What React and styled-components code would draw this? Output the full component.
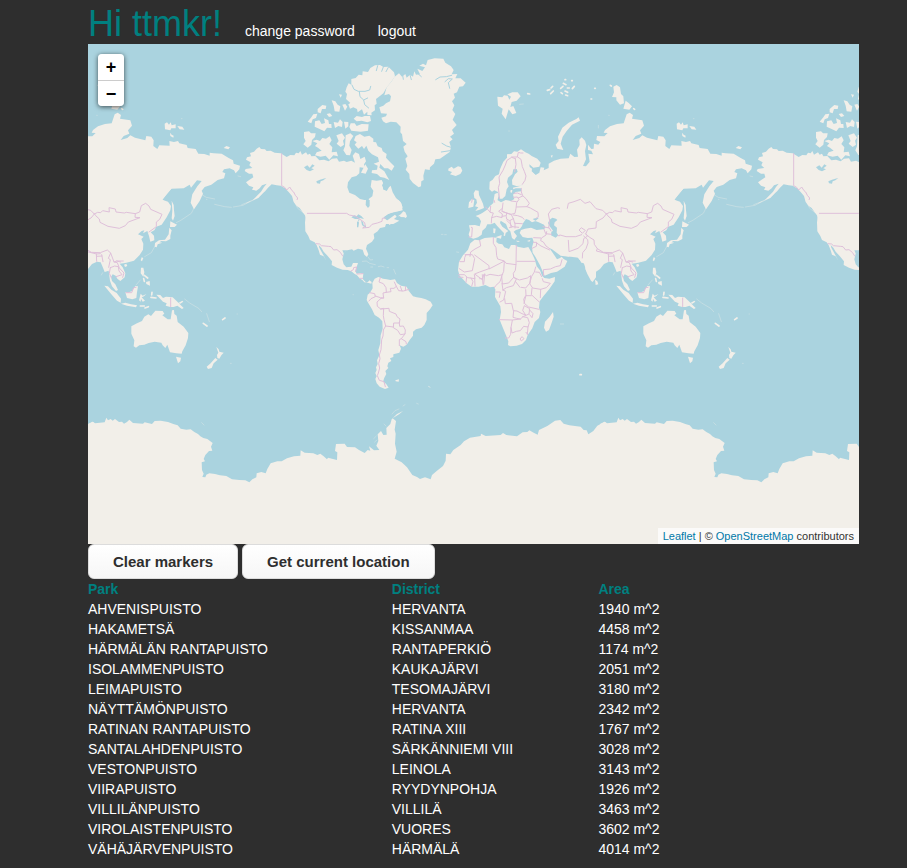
import React from "react";
import styled, { createGlobalStyle } from "styled-components";

const GlobalStyle = createGlobalStyle`
  body {
    margin: 0;
    background: #2e2e2e;
    color: #ffffff;
    font-family: "Liberation Sans", Arial, Helvetica, sans-serif;
    font-size: 14px;
    line-height: 20px;
  }
`;

const Page = styled.div`
  padding: 0 48px 9px 88px;
`;

const Header = styled.header`
  display: flex;
  align-items: baseline;
  gap: 23px;
  height: 44px;
`;

const Greeting = styled.h1`
  margin: 0;
  color: #008080;
  font-size: 36px;
  font-weight: 400;
  line-height: 48px;
`;

const HeaderLink = styled.a`
  color: #ffffff;
  text-decoration: none;
`;

const MapPane = styled.section`
  position: relative;
  height: 500px;
  overflow: hidden;
  background: #aad3df;
`;

const MapDrawing = styled.svg`
  display: block;
  width: 100%;
  height: 100%;

  .land {
    fill: #f2efe9;
  }
  .water {
    fill: #aad3df;
  }
  .isles,
  .channels,
  .borders {
    fill: none;
    stroke-linecap: round;
    stroke-linejoin: round;
  }
  .isles {
    stroke: #f2efe9;
    stroke-width: 5;
  }
  .faint {
    stroke-width: 2;
    opacity: 0.5;
  }
  .channels {
    stroke: #aad3df;
    stroke-width: 3;
  }
  .borders {
    stroke: #dfc0da;
    stroke-width: 3;
  }
`;

const ZoomControl = styled.div`
  position: absolute;
  top: 10px;
  left: 10px;
  display: flex;
  flex-direction: column;
  border-radius: 4px;
  overflow: hidden;
  box-shadow: 0 1px 5px rgba(0, 0, 0, 0.65);
`;

const ZoomButton = styled.button`
  width: 26px;
  height: 26px;
  padding: 0;
  border: 0;
  background: #ffffff;
  color: #000000;
  font: bold 18px/26px "Liberation Sans", Arial, sans-serif;

  & + & {
    border-top: 1px solid #cccccc;
  }
`;

const Attribution = styled.div`
  position: absolute;
  right: 0;
  bottom: 0;
  padding: 0 5px;
  background: rgba(255, 255, 255, 0.7);
  color: #333333;
  font-size: 11px;
  line-height: 16px;

  a {
    color: #0078a8;
    text-decoration: none;
  }
`;

const Actions = styled.div`
  display: flex;
  gap: 4px;
`;

const ActionButton = styled.button`
  height: 35px;
  padding: 0 24px;
  border: 1px solid #dcdcdc;
  border-radius: 6px;
  background: linear-gradient(#ffffff, #f6f6f6);
  color: #2e2e2e;
  font: bold 15px/20px "Liberation Sans", Arial, sans-serif;
`;

const ParkTable = styled.table`
  width: 100%;
  border-collapse: collapse;
  table-layout: fixed;
`;

const HeadCell = styled.th`
  width: ${(p) => p.$width};
  padding: 0;
  color: #008080;
  text-align: left;
`;

const Cell = styled.td`
  padding: 0;
`;

/* Each sheet of the world drawing is plotted at three units per map pixel. */
const Sheet = ({ x, y, children }) => (
  <g transform={`translate(${x} ${y}) scale(${1 / 3})`}>{children}</g>
);

const NorthAmerica = () => (
  <Sheet x={240} y={44}>
    <path className="land" d="M50,314 L58,309 63,315 75,316 80,321 92,320 104,326 122,328 140,339 151,333 163,334 168,326 176,328 181,321 186,332 198,325 203,332 210,329 214,337 226,336 238,349 252,347 266,352 276,344 291,343 297,353 312,350 320,354 334,350 345,356 338,335 346,325 357,330 361,345 374,338 378,352 372,361 375,372 359,370 358,388 349,396 335,400 324,415 322,430 328,446 345,453 360,465 373,468 376,485 385,494 390,480 386,465 397,457 400,440 392,428 395,408 410,410 425,408 431,420 429,436 440,441 447,430 452,425 458,445 468,462 481,473 488,490 480,500 462,503 445,510 430,520 440,530 465,512 470,518 462,525 478,530 460,540 197,540 196,515 188,505 179,492 170,486 161,474 156,456 146,444 135,433 122,425 110,424 95,421 84,431 76,441 67,449 55,462 38,469 51,455 63,443 72,429 80,419 66,424 59,433 49,440 36,437 40,430 27,425 18,415 31,406 40,400 37,389 27,389 14,381 17,375 37,372 28,364 32,355 18,347 21,340 33,337 30,327 42,323Z" />
    <path className="isles faint" d="M67,449 L45,466 26,474 5,482 M30,472 L20,477" />
    <path className="water" d="M192,370 L202,364 209,371 217,361 224,365 214,373 222,376 210,382 200,378Z M229,412 L240,407 250,404 259,402 250,409 242,412 240,419 231,418Z" />
    <path className="land" d="M320,130 L326,118 334,122 334,105 347,102 356,92 367,94 368,82 384,84 391,72 405,64 420,63 430,69 445,68 462,85 465,97 455,112 439,132 430,148 415,160 408,165 410,179 404,184 405,199 394,206 395,214 382,213 382,203 372,212 366,196 353,205 351,195 340,190 330,194 325,181 331,177 318,165 321,150 316,143Z" />
    <path className="channels" d="M336,123 L342,136 355,142 375,142 389,138 392,127 M358,143 L360,158 371,168 374,182 386,192 M371,168 L383,162 M413,65 L409,80 M430,69 L425,82 M445,70 L438,83" />
    <path className="land" d="M418,190 L430,185 438,178 450,172 453,157 447,150 433,154 440,130 455,112 463,99 477,88 486,98 496,90 500,101 510,92 519,98 523,82 528,92 540,91 532,74 547,81 555,70 538,65 549,59 558,64 563,48 584,43 610,44 616,56 633,67 641,78 635,91 652,90 646,103 662,103 677,116 669,127 658,128 651,145 641,149 645,161 636,172 643,184 637,198 646,210 638,227 650,243 636,258 642,269 630,278 638,286 628,294 633,310 629,324 616,333 600,344 586,346 582,359 570,370 569,378 555,376 550,395 551,408 544,412 543,427 536,430 519,417 509,404 508,390 497,377 502,366 496,344 503,337 494,323 490,308 500,300 489,291 486,271 481,265 482,248 469,235 452,233 438,238 429,232 424,221 438,217 441,209 423,208Z" />
    <path className="channels" d="M587,107 L600,99 619,98 635,94 M615,113 L625,104 637,105 625,116 629,133 M520,75 L534,89 544,98 M507,82 L514,107 M487,88 L490,106 M633,310 L620,306 606,298 M630,320 L604,324" />
    <path className="land" d="M192,264 L207,262 213,268 227,268 225,279 216,288 214,302 203,311 190,301 197,291 192,281Z M217,291 L230,287 240,291 247,282 258,284 269,277 275,289 268,300 277,310 275,325 290,323 294,337 280,334 268,347 257,335 242,338 225,334 230,325 245,320 234,311 225,306 232,298Z M289,274 L306,268 315,281 309,290 312,302 302,309 290,299 296,291Z M317,274 L331,268 340,276 330,292 328,305 335,318 330,334 319,333 310,319 315,307Z M347,276 L360,270 373,278 388,275 400,284 400,294 408,295 413,307 425,312 428,322 440,330 438,341 453,357 463,367 455,380 444,373 433,373 421,360 418,371 433,382 442,398 448,408 433,401 421,399 411,390 395,387 396,379 411,377 413,365 401,359 417,353 414,340 396,331 385,320 379,305 372,315 366,306 355,314 344,302 350,295 342,289Z M332,238 L344,238 350,246 365,240 386,241 384,260 362,263 334,260 328,249Z M350,216 L366,219 374,216 390,216 393,231 382,235 365,230 350,232 341,224Z M225,232 L238,229 245,240 255,237 252,223 265,229 267,240 274,240 275,252 261,251 253,262 239,255 224,248Z M203,233 L214,220 220,211 232,209 228,222 218,226 214,238Z M233,195 L247,183 259,185 257,195 246,195 242,208 233,205Z M275,169 L286,172 293,182 301,187 298,203 284,202 281,185Z M297,151 L306,152 302,161Z M307,182 L316,180 322,188 315,200Z M281,234 L294,236 300,226 308,234 306,249 295,246 285,252Z M312,233 L325,234 325,247 316,254Z M260,210 L270,208 277,216 267,219Z M376,361 L384,374 377,389 363,386Z M487,508 L494,505 499,520 480,519Z M625,374 L635,368 641,374 654,367 662,369 667,380 661,390 647,396 630,391 636,384 625,380Z" />
    <path className="water" d="M398,346 L405,347 400,351Z M435,408 L443,415 445,425 441,438 432,438 426,424Z" />
    <path className="borders" d="M125,329 V425 L134,430 140,438 149,429 156,440 161,444 166,454 173,462 171,468 M200,508 H320 L328,514 345,513" />
  </Sheet>
);

const CentralAndSouthAmerica = () => (
  <Sheet x={280} y={200}>
    <path className="isles faint" d="M41,0 L53,25 68,37 M50,4 L67,31" />
    <path className="land" d="M45,0 L60,22 75,42 78,53 75,67 76,94 85,108 90,120 104,127 110,136 116,151 120,164 131,169 139,182 132,169 127,160 118,143 116,135 124,143 131,155 143,168 156,184 155,195 171,203 188,209 203,210 214,214 223,221 231,226 238,234 247,240 253,247 264,246 268,241 275,246 274,251 263,248 256,245 248,237 250,221 240,219 230,221 226,213 234,189 219,189 214,200 199,202 191,193 187,178 192,157 202,151 216,148 221,152 234,146 248,149 253,164 261,171 265,163 258,146 261,135 276,125 283,115 281,102 293,94 300,84 315,81 318,72 327,64 344,61 344,67 327,75 326,65 317,58 304,57 323,41 345,36 368,31 364,10 355,0Z" />
    <path className="land" d="M370,34 L363,42 354,49 367,47 377,54 381,49 376,37Z" />
    <path className="water" d="M214,52 L223,46 230,49 235,43 244,48 252,57 239,54 234,61 237,68 235,82 231,82 231,66 240,59 249,66 251,75 258,78 257,84 246,75 243,61 235,57 225,57Z M187,151 L203,151 199,153 191,160Z M258,0 H269 L269,18 264,24 257,15Z" />
    <path className="isles faint" d="M247,184 L259,183 269,190 286,194 M295,200 L303,198 312,201 M321,203 H326 M272,201 H278 M341,208 L347,222 M265,172 L271,180 278,179" />
    <path className="land" d="M277,249 L284,236 295,231 302,233 309,236 320,238 331,240 345,238 351,249 363,257 380,260 386,272 392,280 399,289 410,292 424,294 437,298 452,305 458,316 450,328 440,339 440,360 433,375 425,383 408,388 399,395 399,407 389,420 380,434 370,440 359,436 363,446 358,458 340,463 340,471 330,475 334,483 325,488 322,499 325,504 316,513 319,522 313,533 309,545 318,551 326,563 315,567 299,560 290,550 286,537 290,529 286,519 290,510 288,502 293,492 291,481 298,466 295,450 301,430 302,406 308,386 307,364 297,353 284,345 276,328 263,306 260,300 263,284 270,278 278,265Z M346,541 L357,538 356,545 347,544Z M445,557 L453,563 446,561Z" />
    <path className="borders" d="M82,40 H200 L208,45 227,49 243,60 254,68 256,78 248,84 268,82 276,73 292,69 306,64 307,55 316,54 M108,131 L119,132 124,137 145,139 153,140 161,150 171,149 181,157 188,168 M213,213 L220,209 221,203 230,201 227,215 M231,222 L249,221 M239,235 L248,235" />
    <path className="borders" d="M301,232 L297,246 310,251 318,263 319,277 309,279 311,294 303,295 291,306 292,319 302,327 311,325 310,347 312,359 317,378 310,390 309,408 305,419 303,449 298,465 300,476 296,491 299,504 295,519 292,527 298,541 312,545 316,560 M269,278 L284,281 286,290 273,296 267,303 M286,288 L301,293 311,294 M319,277 L333,275 331,265 342,265 349,259 343,246 M349,259 L356,272 370,273 387,268 M361,259 L366,273 M377,259 L376,272 M302,327 L327,325 328,334 348,342 351,350 360,357 358,369 341,369 340,383 353,391 361,404 375,402 376,390 370,378 359,379 358,369 M317,378 L340,381 M375,402 L364,416 358,419 358,437 M364,416 L378,425 379,432" />
    <path className="isles faint" d="M219,284 H220 M484,103 H489 M494,104 H499 M530,156 L536,157" />
  </Sheet>
);

const EuropeAndAfrica = () => (
  <Sheet x={440} y={140}>
    <path className="land" d="M148,148 L149,125 158,119 166,108 177,103 180,88 190,65 201,53 201,43 214,42 222,34 232,35 243,28 256,37 266,41 275,48 292,56 302,68 298,80 280,83 268,73 269,81 276,86 275,94 287,106 450,106 450,410 439,392 432,371 417,358 408,345 386,350 362,347 350,338 336,328 328,324 340,341 351,358 360,354 365,350 371,357 382,363 374,380 351,395 333,399 314,407 307,392 300,376 286,350 278,338 276,322 281,305 277,293 263,294 248,291 239,279 243,270 255,266 273,263 290,270 311,268 317,263 312,254 296,247 286,243 297,233 285,235 278,237 287,243 276,247 267,240 258,237 249,250 246,258 240,266 228,270 221,275 231,288 223,299 216,294 211,274 204,267 198,252 182,242 180,249 187,260 205,273 197,279 195,288 191,287 192,279 183,270 171,257 164,248 153,253 142,253 137,263 127,272 125,284 114,292 100,296 89,292 86,283 90,270 87,256 105,255 119,259 123,244 117,233 107,228 120,223 128,218 141,209 150,198 160,189 162,173 164,162 173,158 176,168 172,180 183,187 197,180 213,183 223,177 219,164 227,156 243,154 243,145 227,145 220,148 219,143 240,138 251,137 229,138 217,134 216,120 225,103 233,95 230,87 220,88 217,102 204,113 201,126 206,139 200,148 196,168 187,176 180,176 174,156 163,151 156,155Z" />
    <path className="land" d="M101,160 L106,151 116,152 117,165 124,180 129,191 132,204 119,209 106,213 115,202 105,199 111,188 109,178 103,174Z M87,187 L95,178 103,180 100,200 85,204 86,195Z M166,292 L185,285 183,296Z M160,265 L167,266 165,280 160,279Z M227,302 L240,303 234,306Z M261,303 L272,299 268,305Z M164,177 L173,175 171,183Z M212,150 L217,150 216,158 211,157Z M126,279 H137 M303,85 L307,91 302,93Z M332,47 L338,45 336,54Z" />
    <path className="water" d="M329,239 L337,233 348,236 352,240 344,247 342,256 351,263 350,278 355,286 347,293 333,286 334,276 339,272 329,259 324,249Z" />
    <path className="land" d="M104,299 L118,301 134,294 159,292 170,294 169,306 176,311 187,313 193,322 207,327 213,315 225,315 233,320 252,324 265,321 275,338 284,358 290,379 300,391 306,407 313,414 328,416 345,411 344,424 328,447 310,469 299,484 297,503 301,516 297,534 284,546 277,565 263,585 258,600 246,612 230,617 211,619 204,615 205,604 198,586 188,562 179,539 183,516 181,499 165,471 166,448 161,440 150,442 136,435 116,440 95,440 80,430 69,418 59,407 54,391 57,365 69,346 84,329 91,310Z M339,516 L341,530 334,551 327,570 318,575 312,563 315,545 329,530Z" />
    <path className="borders" d="M178,176 L177,160 175,143 179,130 177,111 189,91 196,75 201,61 215,52 226,56 M224,95 L228,73 226,56 M233,51 L243,58 247,80 253,94 258,108 255,121 247,133 M215,51 L232,51 235,37 242,39 249,39 M244,145 L244,156 248,167 258,176 268,190 261,200 230,201 M222,160 L232,159 244,164 M220,172 L232,171 237,178 230,188 228,205 225,220 213,223 200,219 186,214 189,189 M213,183 L229,185 M248,168 L235,174 M261,200 L271,204 294,217 295,230 288,235 M162,181 L164,187 M152,199 L150,217 160,219 155,233 170,229 186,233 187,222 176,214 186,206 M186,214 L200,219 199,227 186,229 M200,219 L214,224 220,236 209,242 200,237 199,230 M220,225 L233,227 247,232 252,238 M220,235 L224,250 247,251 M200,241 L210,251 217,261 208,263 M217,260 L236,262 M210,242 L213,260 M225,249 L225,264 M155,233 L154,249 M137,201 L149,215 M94,262 L97,263 95,291 87,291 M97,177 L95,187 M309,260 L328,264 333,273 M312,268 L317,281 334,283 M306,293 L318,285 320,275 M281,293 L304,294 302,302 310,306 318,318 329,326 M280,307 L290,307 289,319 276,325 M290,309 L303,318 329,330 M311,407 L310,389 331,387 347,380 361,377 366,359 M326,263 L329,242 325,222 335,208 353,203 377,211 387,206 384,193 407,187 420,179 450,187 M364,266 L366,248 380,245 404,255 411,266 450,260 M365,248 L386,262 407,280 420,288 M354,287 L370,287 386,292 410,290 437,281 450,285 M386,292 L385,328 391,337 389,349 M391,332 L411,329 422,320 429,301 438,293 M433,343 L424,350 M418,269 L432,278 448,269 M425,278 L450,273 M428,275 L423,284" />
    <path className="borders" d="M119,301 L122,318 105,327 92,336 90,349 M75,344 H90 M59,365 H73 L74,353 78,344 97,344 104,356 97,392 73,396 58,386 M104,345 L147,377 147,387 180,370 191,364 M160,292 L160,310 168,323 170,347 173,357 193,363 198,370 228,374 229,316 M231,364 H285 M228,374 L226,391 220,400 221,412 206,429 187,432 185,408 191,394 193,364 M188,404 L175,407 150,403 139,407 132,402 127,419 104,402 119,396 147,386 M134,402 L131,433 M127,404 L129,433 M103,404 L105,416 83,413 73,404 56,404 M80,412 L78,427 M93,414 L99,425 95,439 M104,414 L105,438 M56,411 L69,412 M119,416 H126 M185,410 L180,425 167,437 163,443 M186,431 L189,450 M221,412 L229,417 226,424 240,442 M226,424 L220,437 199,443 189,450 M221,412 L238,420 262,414 272,407 270,430 M287,381 L283,396 275,409 269,430 257,444 244,442 M287,396 L298,397 305,410 M307,416 L310,425 331,430 319,443 302,448 278,444 269,431 M302,448 L301,473 M276,445 L274,464 298,486 M274,467 L257,467 251,478 254,491 266,501 297,508 M257,449 L258,466 252,490 M189,450 L197,454 191,480 180,486 M168,456 L181,456 178,472 M194,476 L196,491 215,490 220,512 231,513 246,521 257,525 248,511 253,497 269,506 267,522 249,530 241,537 230,535 219,532 221,512 M178,539 L217,540 242,537 M217,541 L213,562 212,583 206,594 196,594 M213,563 L216,579 229,574 241,572 251,559 264,561 268,548 263,533 248,530 M264,561 L262,583 M269,510 L279,521 276,533 269,524 M241,596 L246,590 252,596 245,602Z M258,577 L263,583" />
  </Sheet>
);

const NorthernAsia = () => (
  <Sheet x={480} y={44}>
    <path className="land" d="M155,375 L155,384 167,393 178,386 182,370 193,371 191,379 206,372 206,359 222,350 242,344 266,343 271,329 283,339 294,338 291,317 299,303 298,287 305,280 315,290 319,303 315,322 318,346 309,366 318,367 329,353 325,329 339,331 334,320 324,318 324,302 334,315 341,314 342,299 355,302 361,294 349,288 351,276 373,277 383,267 371,266 375,258 390,247 411,240 431,238 440,211 449,206 459,213 456,224 487,229 492,245 480,259 484,269 467,276 458,288 478,282 487,274 501,281 532,289 535,276 550,278 557,289 556,306 568,315 574,304 605,305 604,291 618,294 630,291 634,298 656,303 659,312 683,315 691,329 709,330 725,335 725,326 737,328 761,329 782,342 795,349 797,359 816,365 814,376 803,388 798,379 785,373 768,376 763,384 772,388 768,403 749,408 730,422 710,429 701,440 705,449 695,471 678,496 668,476 673,451 688,427 706,405 701,411 687,409 669,431 665,422 647,433 610,434 595,451 583,467 600,480 600,505 150,505Z" />
    <path className="land" d="M52,158 L67,160 72,154 83,155 88,167 93,158 82,151 97,145 113,145 122,157 110,170 95,174 91,189 100,186 109,207 97,211 86,196 77,226 65,209 68,194 54,185Z M227,302 L236,291 234,278 247,251 266,236 289,225 296,220 300,230 276,242 260,261 248,278 242,299 250,318 232,314Z M400,128 L410,123 420,130 423,150 430,157 432,178 420,182 409,169 409,160 396,159 402,145Z M437,170 L446,177 456,187 448,197 430,194Z M590,239 L597,235 603,242 608,235 611,244 623,241 623,253 610,253 607,259 591,256Z M628,246 L643,248 649,257 635,256Z M606,266 L611,272 617,275 616,281 607,276Z M767,312 L775,306 786,310 781,316Z" />
    <path className="isles" d="M143,149 L149,150 M344,133 H346 M333,165 H335 M391,124 L394,126 M202,139 L209,137 M213,132 L218,127 M220,141 L212,149 M242,133 L249,127 M243,146 L247,149 M255,107 H257 M250,118 L258,122 M262,132 L268,132 M275,110 H277 M277,134 L283,127 M263,145 L255,141 M257,153 L263,155 M461,194 L464,196" />
    <path className="isles faint" d="M119,181 L130,180 M86,261 H88 M386,214 H388 M355,244 V252 M640,224 H642 M810,396 L818,398 M715,466 H717 M740,481 L770,488 790,490 M796,489 L825,484 857,467" />
  </Sheet>
);

const SouthernAsiaAndOceania = () => (
  <Sheet x={560} y={180}>
    <path className="land" d="M0,0 H390 L370,26 343,59 360,65 369,78 367,91 356,112 341,134 325,140 319,151 308,157 318,167 319,181 307,185 303,168 298,153 285,160 289,151 281,153 270,163 287,170 280,177 286,191 285,209 275,225 258,242 235,248 226,250 215,251 224,262 232,280 230,292 217,303 208,296 203,287 194,283 189,291 192,303 202,313 210,330 204,333 192,319 186,302 182,272 170,276 165,263 158,247 147,245 132,252 120,267 108,275 108,292 98,306 93,302 82,282 76,267 78,250 64,248 56,233 38,231 0,225Z" />
    <path className="land" d="M105,299 L112,304 115,313 107,315Z M169,317 L180,319 190,329 206,339 219,356 218,368 207,362 190,343Z M219,371 L232,368 249,373 267,376 264,382 237,377Z M232,337 L240,338 252,333 262,318 270,319 267,337 265,354 253,358 237,354Z M278,341 L284,347 295,342 288,349 281,352 291,362 284,365 279,356 278,365 273,361Z M325,344 L337,345 345,354 354,350 374,352 385,362 394,371 407,384 402,387 388,377 377,381 367,381 353,377 356,370 345,365Z M391,369 L403,362 406,365 397,371Z M279,263 L286,263 289,277 286,290 278,280Z M294,306 L305,303 306,317 295,312Z M281,232 L286,234 282,244 278,241Z M228,254 L235,251 238,258 231,261Z M371,62 L377,75 378,91 380,108 375,122 371,115 373,92Z M367,124 L377,129 387,134 380,141 366,141Z M364,143 L371,151 367,167 367,177 354,184 340,183 334,187 343,188 329,193 326,202 320,200 321,189 333,181 351,179 362,163Z" />
    <path className="land" d="M250,439 L267,430 282,423 289,410 301,403 309,408 322,392 344,393 349,401 343,406 359,418 368,418 372,391 378,390 379,402 386,407 389,426 407,440 421,459 420,474 413,496 403,514 401,521 385,520 366,517 358,494 352,504 344,496 340,488 320,485 302,489 289,494 274,496 264,503 257,499 259,481 250,461Z M384,530 L391,532 399,533 397,544 390,550Z M505,501 L512,508 514,515 527,518 520,526 514,536 508,534 507,525 511,518Z M502,534 L509,539 497,550 491,564 480,567 476,560 488,550Z" />
    <path className="isles" d="M277,378 H289 M301,380 L291,384 M309,352 L324,354 M312,337 L311,345 M289,286 L299,294 M287,296 L289,304 M466,430 L477,438 M524,419 L531,414 M60,584 H64" />
    <path className="isles faint" d="M385,128 L400,120 430,100 440,80 M410,357 L425,369 452,385 461,395 M476,401 L484,425 M567,402 H568 M160,285 L164,278 M1,432 H11 M264,315 L277,300 M320,200 L310,218 290,230 M450,37 L475,52 500,57 M547,550 H550" />
    <path className="borders" d="M22,85 L25,70 42,65 61,58 75,70 90,65 108,86 128,91 139,102 129,114 109,125 108,144 84,147 77,162 89,172 102,180 103,193 112,206 130,217 157,218 178,210 188,219 181,235 187,239 182,262 M112,206 L109,213 146,222 157,221 M145,221 L146,244 M161,224 L165,245 M146,229 L162,228 M139,102 L149,97 158,98 164,92 184,96 183,83 202,87 204,96 229,99 235,97 262,101 275,96 280,77 293,70 303,78 308,88 342,103 335,118 325,126 325,140 303,156 M262,101 L261,112 276,113 241,126 232,137 214,145 180,139 156,127 154,117 143,107 139,101 M77,162 L83,168 71,176 69,191 54,205 27,215 25,181 M71,168 L83,179 84,189 78,206 68,218 67,234 M188,219 L198,246 206,243 218,246 M187,263 L184,280 190,293 M187,263 L200,258 211,260 213,273 222,284 204,290 M198,246 L208,248 214,264 228,279 224,292 M206,243 L226,243 M234,338 L251,338 257,323 264,322 M368,354 V380 M0,165 L18,170 47,170 65,164 M65,144 L76,151 67,160 58,151Z" />
  </Sheet>
);

const Antarctica = () => (
  <Sheet x={80} y={400}>
    <path className="land" d="M24,72 L32,68 38,65 45,70 74,67 79,53 84,61 92,57 98,62 105,57 117,66 126,65 132,71 141,66 148,59 159,69 189,71 194,67 216,72 224,63 242,62 264,66 280,72 293,76 302,86 319,89 332,88 343,96 354,102 361,109 370,114 382,117 398,129 393,140 397,152 387,153 376,165 371,177 375,184 365,187 366,210 371,221 367,231 376,232 379,224 388,220 405,222 420,226 439,228 456,238 478,240 496,241 508,247 517,238 529,232 530,220 544,216 557,220 562,207 572,190 592,184 605,184 621,175 642,169 661,167 662,151 674,158 700,160 712,165 721,161 731,169 741,178 744,173 771,180 772,157 765,153 768,132 794,131 801,141 825,142 837,150 854,159 863,150 871,152 867,139 882,151 898,150 889,137 895,123 893,103 903,93 910,105 920,104 919,84 931,72 935,58 951,42 969,33 957,43 938,55 948,63 944,89 947,101 945,131 950,155 944,176 965,187 981,202 997,225 1011,231 1020,237 1035,232 1052,238 1056,225 1071,212 1089,198 1097,182 1098,161 1111,163 1120,150 1142,135 1152,124 1170,113 1202,108 1203,101 1217,108 1262,105 1269,99 1279,105 1311,109 1328,97 1342,96 1348,91 1361,98 1373,104 1377,90 1402,78 1425,62 1441,60 1451,71 1468,76 1502,80 1511,90 1520,91 1525,103 1540,93 1552,77 1574,65 1580,70 V700 H24Z" />
    <path className="isles faint" d="M881,116 L889,108 M884,126 L891,120 M912,72 L918,78 M936,42 L945,32 957,27 M969,18 L975,14 M365,68 L372,75 M1010,10 L1015,12" />
  </Sheet>
);

const WORLD_WIDTH = 512;
const WORLD_COPIES = [-2, -1, 0, 1, 2];

const WorldMap = () => (
  <MapDrawing viewBox="88 44 771 500" preserveAspectRatio="xMidYMid slice" role="img" aria-label="World map">
    {WORLD_COPIES.map((n) => (
      <g key={n} transform={`translate(${n * WORLD_WIDTH} 0)`}>
        <NorthAmerica />
        <CentralAndSouthAmerica />
        <NorthernAsia />
        <EuropeAndAfrica />
        <SouthernAsiaAndOceania />
        <Antarctica />
      </g>
    ))}
  </MapDrawing>
);

const PARKS = [
  ["AHVENISPUISTO", "HERVANTA", 1940],
  ["HAKAMETSÄ", "KISSANMAA", 4458],
  ["HÄRMÄLÄN RANTAPUISTO", "RANTAPERKIÖ", 1174],
  ["ISOLAMMENPUISTO", "KAUKAJÄRVI", 2051],
  ["LEIMAPUISTO", "TESOMAJÄRVI", 3180],
  ["NÄYTTÄMÖNPUISTO", "HERVANTA", 2342],
  ["RATINAN RANTAPUISTO", "RATINA XIII", 1767],
  ["SANTALAHDENPUISTO", "SÄRKÄNNIEMI VIII", 3028],
  ["VESTONPUISTO", "LEINOLA", 3143],
  ["VIIRAPUISTO", "RYYDYNPOHJA", 1926],
  ["VILLILÄNPUISTO", "VILLILÄ", 3463],
  ["VIROLAISTENPUISTO", "VUORES", 3602],
  ["VÄHÄJÄRVENPUISTO", "HÄRMÄLÄ", 4014],
];

export default function App() {
  return (
    <>
      <GlobalStyle />
      <Page>
        <Header>
          <Greeting>Hi ttmkr!</Greeting>
          <HeaderLink href="#password">change password</HeaderLink>
          <HeaderLink href="#logout">logout</HeaderLink>
        </Header>
        <main>
          <MapPane>
            <WorldMap />
            <ZoomControl>
              <ZoomButton type="button" title="Zoom in">+</ZoomButton>
              <ZoomButton type="button" title="Zoom out">−</ZoomButton>
            </ZoomControl>
            <Attribution>
              <a href="#leaflet">Leaflet</a> | © <a href="#osm">OpenStreetMap</a> contributors
            </Attribution>
          </MapPane>
          <Actions>
            <ActionButton type="button">Clear markers</ActionButton>
            <ActionButton type="button">Get current location</ActionButton>
          </Actions>
          <ParkTable>
            <thead>
              <tr>
                <HeadCell scope="col" $width="39.4%">Park</HeadCell>
                <HeadCell scope="col" $width="26.8%">District</HeadCell>
                <HeadCell scope="col">Area</HeadCell>
              </tr>
            </thead>
            <tbody>
              {PARKS.map(([park, district, area]) => (
                <tr key={park}>
                  <Cell>{park}</Cell>
                  <Cell>{district}</Cell>
                  <Cell>{`${area} m^2`}</Cell>
                </tr>
              ))}
            </tbody>
          </ParkTable>
        </main>
      </Page>
    </>
  );
}
